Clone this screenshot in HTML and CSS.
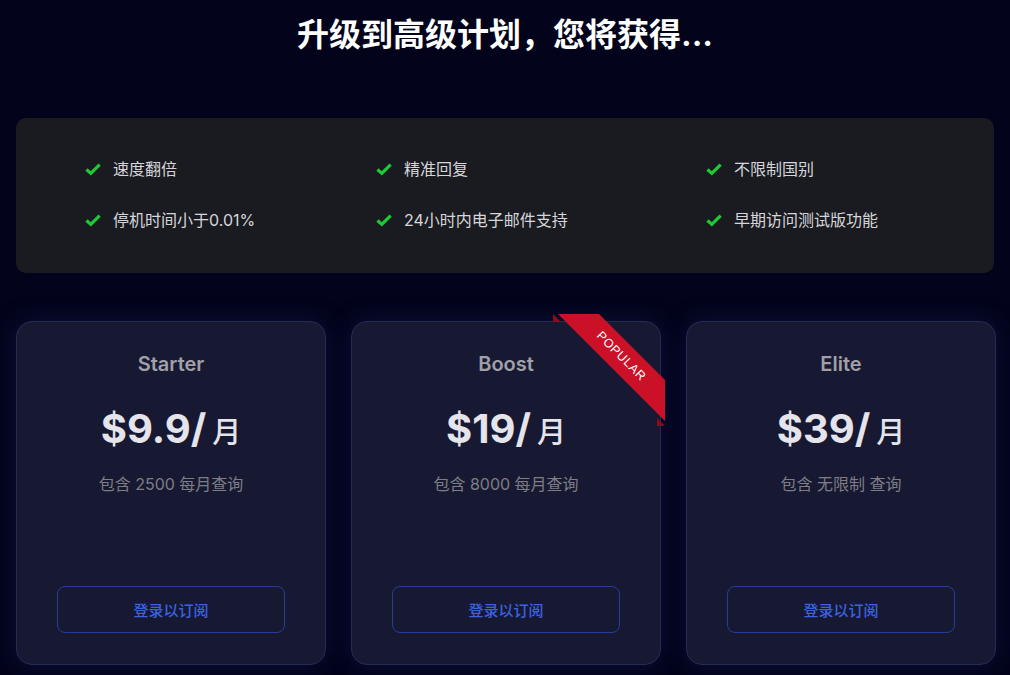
FILE: index.html
```html
<!DOCTYPE html>
<html lang="zh">
<head>
<meta charset="utf-8">
<title>升级到高级计划</title>
<link rel="stylesheet" href="styles.css">
</head>
<body>
<div class="page">
  <h1 class="title">升级到高级计划，您将获得...</h1>

  <div class="features">
    <div class="feature"><svg class="check" viewBox="0 0 14 14"><path d="M1.3 7.4 L5.1 10.8 L12.8 3.2"/></svg><span>速度翻倍</span></div>
    <div class="feature"><svg class="check" viewBox="0 0 14 14"><path d="M1.3 7.4 L5.1 10.8 L12.8 3.2"/></svg><span>精准回复</span></div>
    <div class="feature"><svg class="check" viewBox="0 0 14 14"><path d="M1.3 7.4 L5.1 10.8 L12.8 3.2"/></svg><span>不限制国别</span></div>
    <div class="feature"><svg class="check" viewBox="0 0 14 14"><path d="M1.3 7.4 L5.1 10.8 L12.8 3.2"/></svg><span>停机时间小于0.01%</span></div>
    <div class="feature"><svg class="check" viewBox="0 0 14 14"><path d="M1.3 7.4 L5.1 10.8 L12.8 3.2"/></svg><span>24小时内电子邮件支持</span></div>
    <div class="feature"><svg class="check" viewBox="0 0 14 14"><path d="M1.3 7.4 L5.1 10.8 L12.8 3.2"/></svg><span>早期访问测试版功能</span></div>
  </div>

  <div class="plans">
    <div class="card">
      <div class="plan-name">Starter</div>
      <div class="price"><span class="amount">$9.9/</span><span class="unit">月</span></div>
      <div class="desc">包含 2500 每月查询</div>
      <button class="btn">登录以订阅</button>
    </div>
    <div class="card">
      <div class="ribbon"><span>POPULAR</span></div>
      <div class="plan-name">Boost</div>
      <div class="price"><span class="amount">$19/</span><span class="unit">月</span></div>
      <div class="desc">包含 8000 每月查询</div>
      <button class="btn">登录以订阅</button>
    </div>
    <div class="card">
      <div class="plan-name">Elite</div>
      <div class="price"><span class="amount">$39/</span><span class="unit">月</span></div>
      <div class="desc">包含 无限制 查询</div>
      <button class="btn">登录以订阅</button>
    </div>
  </div>
</div>
</body>
</html>
```

FILE: styles.css
```css
* { box-sizing: border-box; }
html, body {
  margin: 0;
  padding: 0;
  background: #03041b;
  height: 100%;
  overflow: hidden;
}
body {
  font-family: Inter, "Noto Sans CJK SC", sans-serif;
  color: #e4e4e7;
}
.page {
  padding: 14px 16px 0 16px;
}
.title {
  margin: 0;
  text-align: center;
  font-size: 32px;
  line-height: 42px;
  font-weight: 700;
  color: #ffffff;
}
.features {
  margin-top: 62px;
  background: #1a1b21;
  border-radius: 10px;
  padding: 40px 0 42px 69px;
  display: grid;
  grid-template-columns: 291px 330px 1fr;
  row-gap: 29px;
}
.feature {
  display: flex;
  align-items: center;
  gap: 12px;
  font-size: 16px;
  line-height: 22px;
  color: #d6d6da;
}
.check {
  width: 16px;
  height: 16px;
  flex: none;
}
.check path {
  fill: none;
  stroke: #1ccb35;
  stroke-width: 2.8;
  stroke-linecap: butt;
  stroke-linejoin: miter;
}
.plans {
  margin-top: 48px;
  display: grid;
  grid-template-columns: repeat(3, 310px);
  column-gap: 25px;
}
.card {
  position: relative;
  height: 344px;
  background: #171932;
  border: 1px solid #262b52;
  border-radius: 16px;
  box-shadow: 0 0 24px rgba(30, 40, 110, 0.35);
  padding: 30px 40px 31px;
  display: flex;
  flex-direction: column;
  align-items: center;
}
.plan-name {
  font-size: 20px;
  line-height: 24px;
  font-weight: 600;
  color: #a0a0a8;
}
.price {
  margin-top: 29px;
  line-height: 48px;
  display: flex;
  align-items: baseline;
  gap: 6px;
}
.amount {
  font-size: 40px;
  font-weight: 700;
  color: #e4e4ea;
}
.unit {
  font-size: 29px;
  font-weight: 500;
  color: #e4e4ea;
}
.desc {
  margin-top: 16px;
  font-size: 16px;
  line-height: 22px;
  color: #7d7d86;
}
.btn {
  margin-top: auto;
  width: 228px;
  height: 47px;
  background: transparent;
  border: 1px solid #263d95;
  border-radius: 8px;
  font-family: Inter, "Noto Sans CJK SC", sans-serif;
  font-size: 15px;
  font-weight: 500;
  color: #3b63e0;
}
.ribbon {
  position: absolute;
  top: -8px;
  right: -5px;
  width: 112px;
  height: 112px;
  overflow: hidden;
}
.ribbon::before,
.ribbon::after {
  content: "";
  position: absolute;
  z-index: 0;
  border: 4px solid #8c0b1c;
  border-top-color: transparent;
  border-right-color: transparent;
}
.ribbon::before { top: 0; left: 0; }
.ribbon::after { bottom: 0; right: 0; }
.ribbon span {
  position: absolute;
  z-index: 1;
  display: block;
  width: 170px;
  height: 29px;
  left: -17px;
  top: 28px;
  transform: rotate(45deg);
  background: #cb1127;
  color: #ffffff;
  font-family: "Liberation Sans", Arial, sans-serif;
  font-size: 12.5px;
  line-height: 29px;
  letter-spacing: 0.6px;
  text-align: center;
}
```
